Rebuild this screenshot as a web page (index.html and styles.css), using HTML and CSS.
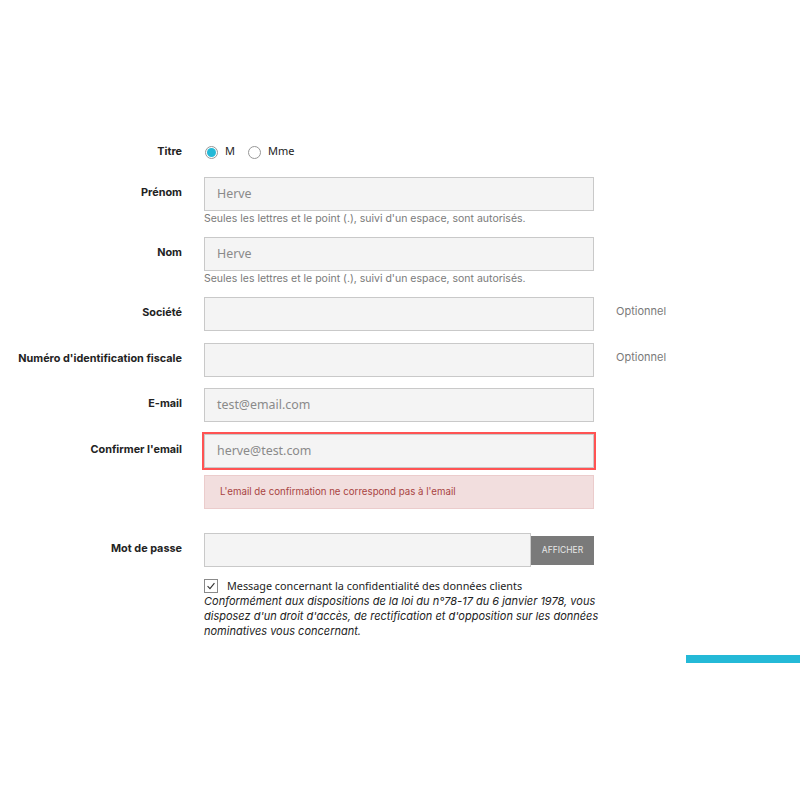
FILE: index.html
```html
<!DOCTYPE html>
<html lang="fr">
<head>
<meta charset="utf-8">
<link rel="stylesheet" href="styles.css">
</head>
<body>
<form class="form">
  <div class="row row-titre">
    <div class="label">Titre</div>
    <div class="field radios">
      <label class="radio"><span class="dot checked"></span>M</label>
      <label class="radio"><span class="dot"></span>Mme</label>
    </div>
  </div>
  <div class="row">
    <div class="label">Prénom</div>
    <div class="field">
      <div class="input">Herve</div>
      <div class="help">Seules les lettres et le point (.), suivi d'un espace, sont autorisés.</div>
    </div>
  </div>
  <div class="row">
    <div class="label">Nom</div>
    <div class="field">
      <div class="input">Herve</div>
      <div class="help">Seules les lettres et le point (.), suivi d'un espace, sont autorisés.</div>
    </div>
  </div>
  <div class="row">
    <div class="label">Société</div>
    <div class="field"><div class="input"></div></div>
    <div class="comment">Optionnel</div>
  </div>
  <div class="row row-tight">
    <div class="label">Numéro d'identification fiscale</div>
    <div class="field"><div class="input"></div></div>
    <div class="comment">Optionnel</div>
  </div>
  <div class="row">
    <div class="label">E-mail</div>
    <div class="field"><div class="input">test@email.com</div></div>
  </div>
  <div class="row row-error">
    <div class="label">Confirmer l'email</div>
    <div class="field">
      <div class="input invalid">herve@test.com</div>
      <div class="alert">L'email de confirmation ne correspond pas à l'email</div>
    </div>
  </div>
  <div class="row">
    <div class="label">Mot de passe</div>
    <div class="field pwd">
      <div class="input"></div>
      <button type="button" class="show">AFFICHER</button>
    </div>
  </div>
  <div class="row">
    <div class="label"></div>
    <div class="field">
      <label class="check"><span class="box"><svg viewBox="0 0 14 14" width="14" height="14"><path d="M3 7.2 L5.8 10 L11 3.6" fill="none" stroke="#333" stroke-width="1.3"/></svg></span>Message concernant la confidentialité des données clients</label>
      <p class="legal">Conformément aux dispositions de la loi du n°78-17 du 6 janvier 1978, vous disposez d'un droit d'accès, de rectification et d'opposition sur les données nominatives vous concernant.</p>
    </div>
  </div>
</form>
<div class="bar-wrap"><div class="bar"></div></div>
</body>
</html>
```
FILE: styles.css
```css
html, body {
  margin: 0;
  padding: 0;
  background: #fff;
}
body {
  font-family: Inter, "Noto Sans", sans-serif;
  color: #232323;
  width: 800px;
  height: 800px;
}
.form {
  padding-top: 144px;
}
.row {
  display: flex;
  align-items: flex-start;
  margin-bottom: 12px;
}
.row-tight {
  margin-bottom: 11px;
}
.label {
  width: 182px;
  flex: none;
  text-align: right;
  font-weight: 700;
  font-size: 10.85px;
  line-height: 15px;
  padding-top: 8px;
  color: #232323;
}
.row-titre .label {
  padding-top: 0;
}
.field {
  margin-left: 22px;
  width: 390px;
  flex: none;
}
.comment {
  margin-left: 22px;
  font-size: 11px;
  line-height: 15px;
  padding-top: 7px;
  color: #7a7a7a;
}
.radios {
  display: flex;
  height: 20px;
  margin-bottom: 1px;
}
.radio {
  display: flex;
  align-items: flex-start;
  font-family: "Noto Sans", sans-serif;
  font-size: 11px;
  line-height: 13px;
  color: #232323;
  margin-right: 12px;
  margin-left: 1px;
}
.dot {
  width: 11px;
  height: 11px;
  border: 1px solid #979797;
  border-radius: 50%;
  margin-right: 7px;
  margin-top: 2px;
  box-sizing: content-box;
  background: #fff;
  position: relative;
}
.dot.checked::after {
  content: "";
  position: absolute;
  left: 1px;
  top: 1px;
  width: 9px;
  height: 9px;
  border-radius: 50%;
  background: #24b9d7;
}
.input {
  box-sizing: border-box;
  height: 34px;
  border: 1px solid #c9c9c9;
  background: #f4f4f4;
  padding: 0 12px;
  font-family: "Noto Sans", sans-serif;
  font-size: 12.4px;
  line-height: 32px;
  color: #8a8a8a;
}
.input.invalid {
  outline: 2px solid #ff5353;
  outline-offset: 0;
}
.help {
  font-size: 10.5px;
  line-height: 14px;
  padding-top: 1px;
  margin-bottom: -1px;
  color: #7a7a7a;
}
.alert {
  box-sizing: border-box;
  margin-top: 7px;
  height: 34px;
  background: #f2dede;
  border: 1px solid #ebcccc;
  color: #a94442;
  font-size: 9.7px;
  line-height: 32px;
  padding-left: 15px;
  margin-bottom: 12px;
}
.pwd {
  display: flex;
  align-items: center;
}
.pwd .input {
  flex: 1;
}
.show {
  height: 29px;
  width: 63px;
  flex: none;
  border: 0;
  background: #7a7a7a;
  color: #e8e8e8;
  font-family: Inter, sans-serif;
  font-size: 8.5px;
  padding: 0;
}
.check {
  display: flex;
  align-items: center;
  font-family: "Noto Sans", sans-serif;
  font-size: 10.8px;
  line-height: 15px;
  color: #232323;
  margin-top: -1px;
}
.box {
  width: 12px;
  height: 12px;
  border: 1px solid #8a8a8a;
  margin-right: 9px;
  display: flex;
  align-items: center;
  justify-content: center;
  background: #fff;
}
.box svg {
  width: 12px;
  height: 12px;
}
.legal {
  margin: 1px 0 0;
  font-style: italic;
  font-size: 11px;
  line-height: 15px;
  color: #232323;
  width: 400px;
}
.bar-wrap {
  display: flex;
  justify-content: flex-end;
  padding-top: 4px;
}
.bar {
  width: 114px;
  height: 8px;
  background: #24b9d7;
}
```
